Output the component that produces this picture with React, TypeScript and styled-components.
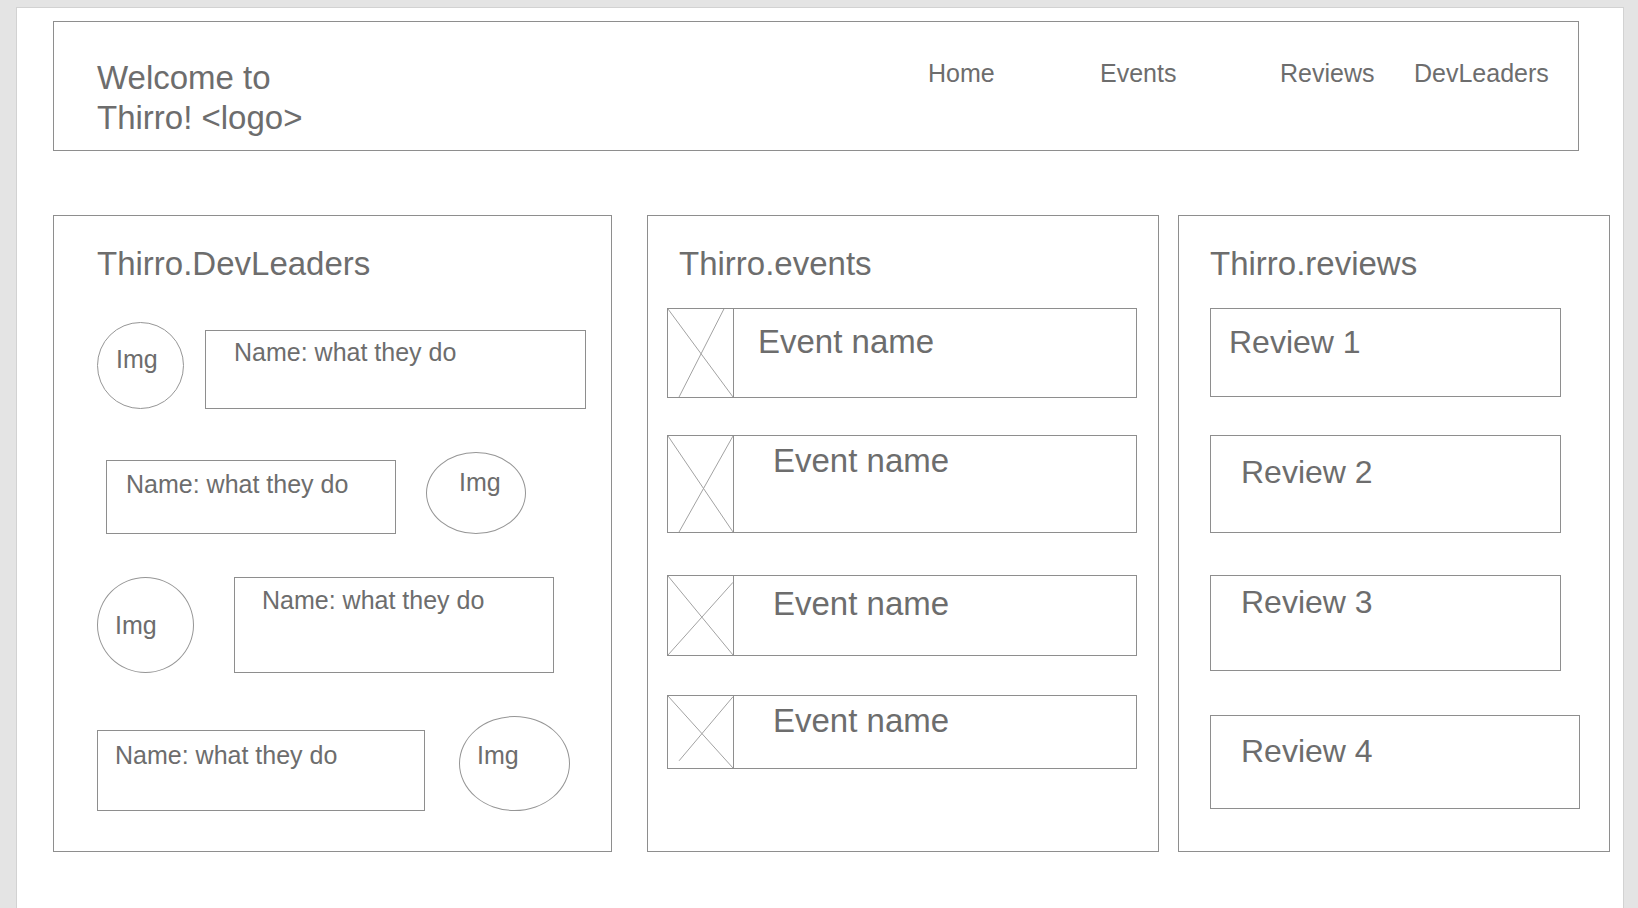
import styled, { createGlobalStyle } from "styled-components";

const GlobalStyle = createGlobalStyle`
  html, body {
    margin: 0;
    padding: 0;
  }
  body {
    background: #e4e4e4;
    font-family: "Liberation Sans", Arial, Helvetica, sans-serif;
    color: #6d6d6d;
  }
  * {
    box-sizing: border-box;
  }
`;

const Canvas = styled.div`
  margin: 7px 0 0 16px;
  width: 1608px;
  min-height: calc(100vh - 7px);
  background: #fff;
  border: 1px solid #d2d2d2;
  border-bottom: none;
  padding: 13px 0 0 36px;
`;

const Header = styled.header`
  display: flex;
  align-items: flex-start;
  width: 1526px;
  height: 130px;
  border: 1px solid #8e8e8e;
  padding: 36px 30px 0 43px;
`;

const SiteTitle = styled.h1`
  margin: 0;
  font-size: 33px;
  line-height: 40px;
  font-weight: 400;
`;

const Nav = styled.nav`
  display: flex;
  margin-left: auto;
`;

const NavLink = styled.a<{ $w: number }>`
  width: ${(p) => p.$w}px;
  font-size: 25px;
  line-height: 30px;
  color: #6d6d6d;
  text-decoration: none;
  white-space: nowrap;
`;

const Board = styled.main`
  display: flex;
  align-items: flex-start;
  margin-top: 64px;
`;

const Panel = styled.section<{ $w: number; $after?: number }>`
  width: ${(p) => p.$w}px;
  height: 637px;
  margin-right: ${(p) => p.$after ?? 0}px;
  border: 1px solid #8e8e8e;
  padding-top: 29px;
`;

const PanelTitle = styled.h2<{ $indent: number }>`
  margin: 0;
  padding-left: ${(p) => p.$indent}px;
  font-size: 33px;
  line-height: 38px;
  font-weight: 400;
`;

/* DevLeaders */

const DevList = styled.div`
  display: flex;
  flex-direction: column;
  gap: 43px;
  margin-top: 39px;
`;

const DevRow = styled.div<{ $indent: number; $gap: number }>`
  display: flex;
  align-items: flex-start;
  padding-left: ${(p) => p.$indent}px;
  gap: ${(p) => p.$gap}px;
`;

type Shape = { w: number; h: number; top: number; px: number; py: number };

const DevCard = styled.div<{ $s: Shape }>`
  width: ${(p) => p.$s.w}px;
  height: ${(p) => p.$s.h}px;
  margin-top: ${(p) => p.$s.top}px;
  padding: ${(p) => `${p.$s.py}px 0 0 ${p.$s.px}px`};
  border: 1px solid #8e8e8e;
  font-size: 25px;
  line-height: 30px;
  white-space: nowrap;
`;

const Avatar = styled.div<{ $s: Shape }>`
  flex-shrink: 0;
  width: ${(p) => p.$s.w}px;
  height: ${(p) => p.$s.h}px;
  margin-top: ${(p) => p.$s.top}px;
  padding: ${(p) => `${p.$s.py}px 0 0 ${p.$s.px}px`};
  border: 1px solid #969696;
  border-radius: 50%;
  font-size: 25px;
  line-height: 30px;
`;

/* Events */

const EventList = styled.div`
  display: flex;
  flex-direction: column;
  margin-top: 25px;
  padding-left: 19px;
`;

const EventCard = styled.div<{ $h: number; $top: number }>`
  display: flex;
  width: 470px;
  height: ${(p) => p.$h}px;
  margin-top: ${(p) => p.$top}px;
  border: 1px solid #8e8e8e;
`;

const Thumb = styled.div`
  flex-shrink: 0;
  width: 66px;
  border-right: 1px solid #8e8e8e;

  svg {
    display: block;
    width: 100%;
    height: 100%;
  }

  line {
    stroke: #a2a2a2;
    stroke-width: 1;
  }
`;

const EventName = styled.div<{ $px: number; $py: number }>`
  padding: ${(p) => `${p.$py}px 0 0 ${p.$px}px`};
  font-size: 33px;
  line-height: 38px;
`;

/* Reviews */

const ReviewList = styled.div`
  display: flex;
  flex-direction: column;
  align-items: flex-start;
  margin-top: 25px;
  padding-left: 31px;
`;

const ReviewCard = styled.div<{ $s: Shape }>`
  width: ${(p) => p.$s.w}px;
  height: ${(p) => p.$s.h}px;
  margin-top: ${(p) => p.$s.top}px;
  padding: ${(p) => `${p.$s.py}px 0 0 ${p.$s.px}px`};
  border: 1px solid #8e8e8e;
  font-size: 32px;
  line-height: 38px;
`;

type DevRowData = {
  indent: number;
  gap: number;
  imageFirst: boolean;
  card: Shape;
  avatar: Shape;
};

const devRows: DevRowData[] = [
  {
    indent: 43,
    gap: 21,
    imageFirst: true,
    avatar: { w: 87, h: 87, top: 0, px: 18, py: 21 },
    card: { w: 381, h: 79, top: 8, px: 28, py: 6 },
  },
  {
    indent: 52,
    gap: 30,
    imageFirst: false,
    card: { w: 290, h: 74, top: 8, px: 19, py: 8 },
    avatar: { w: 100, h: 82, top: 0, px: 32, py: 14 },
  },
  {
    indent: 43,
    gap: 40,
    imageFirst: true,
    avatar: { w: 97, h: 96, top: 0, px: 17, py: 32 },
    card: { w: 320, h: 96, top: 0, px: 27, py: 7 },
  },
  {
    indent: 43,
    gap: 34,
    imageFirst: false,
    card: { w: 328, h: 81, top: 14, px: 17, py: 9 },
    avatar: { w: 111, h: 95, top: 0, px: 17, py: 23 },
  },
];

const events = [
  { h: 90, top: 0, px: 24, py: 14, cross: [86, 0, 17, 100] },
  { h: 98, top: 37, px: 39, py: 6, cross: [100, 0, 17, 100] },
  { h: 81, top: 42, px: 39, py: 9, cross: [100, 8, 0, 100] },
  { h: 74, top: 39, px: 39, py: 6, cross: [100, 1, 17, 90] },
];

const reviews: Shape[] = [
  { w: 351, h: 89, top: 0, px: 18, py: 14 },
  { w: 351, h: 98, top: 38, px: 30, py: 17 },
  { w: 351, h: 96, top: 42, px: 30, py: 7 },
  { w: 370, h: 94, top: 44, px: 30, py: 16 },
];

const Placeholder = ({ cross }: { cross: number[] }) => (
  <Thumb>
    <svg viewBox="0 0 100 100" preserveAspectRatio="none">
      <line x1="0" y1="0" x2="100" y2="100" vectorEffect="non-scaling-stroke" />
      <line
        x1={cross[0]}
        y1={cross[1]}
        x2={cross[2]}
        y2={cross[3]}
        vectorEffect="non-scaling-stroke"
      />
    </svg>
  </Thumb>
);

const App = () => {
  return (
    <>
      <GlobalStyle />
      <Canvas>
        <Header>
          <SiteTitle>
            Welcome to
            <br />
            Thirro! &lt;logo&gt;
          </SiteTitle>
          <Nav>
            <NavLink $w={172}>Home</NavLink>
            <NavLink $w={180}>Events</NavLink>
            <NavLink $w={134}>Reviews</NavLink>
            <NavLink $w={134}>DevLeaders</NavLink>
          </Nav>
        </Header>

        <Board>
          <Panel $w={559} $after={35}>
            <PanelTitle $indent={43}>Thirro.DevLeaders</PanelTitle>
            <DevList>
              {devRows.map((row, i) => {
                const img = <Avatar $s={row.avatar}>Img</Avatar>;
                const card = <DevCard $s={row.card}>Name: what they do</DevCard>;
                return (
                  <DevRow key={i} $indent={row.indent} $gap={row.gap}>
                    {row.imageFirst ? img : card}
                    {row.imageFirst ? card : img}
                  </DevRow>
                );
              })}
            </DevList>
          </Panel>

          <Panel $w={512} $after={19}>
            <PanelTitle $indent={31}>Thirro.events</PanelTitle>
            <EventList>
              {events.map((ev, i) => (
                <EventCard key={i} $h={ev.h} $top={ev.top}>
                  <Placeholder cross={ev.cross} />
                  <EventName $px={ev.px} $py={ev.py}>
                    Event name
                  </EventName>
                </EventCard>
              ))}
            </EventList>
          </Panel>

          <Panel $w={432}>
            <PanelTitle $indent={31}>Thirro.reviews</PanelTitle>
            <ReviewList>
              {reviews.map((r, i) => (
                <ReviewCard key={i} $s={r}>
                  Review {i + 1}
                </ReviewCard>
              ))}
            </ReviewList>
          </Panel>
        </Board>
      </Canvas>
    </>
  );
};

export default App;
